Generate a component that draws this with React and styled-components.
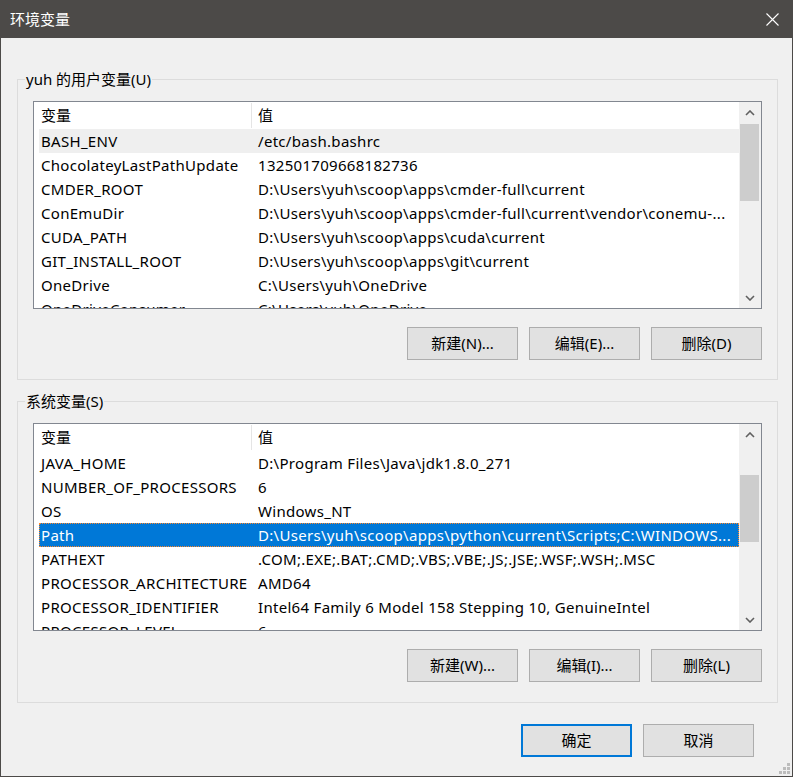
import React from 'react'
import styled, { createGlobalStyle } from 'styled-components'

const GlobalStyle = createGlobalStyle`
  html, body {
    margin: 0;
    padding: 0;
    background: #f0f0f0;
  }
  body {
    font-family: "Noto Sans", "Noto Sans CJK SC", sans-serif;
    font-size: 15px;
    color: #000;
  }
`

const Window = styled.div`
  position: relative;
  width: 793px;
  height: 777px;
  box-sizing: border-box;
  border: 1px solid #4c4a48;
  border-top: 0;
  background: #f0f0f0;
  display: flex;
  flex-direction: column;
  overflow: hidden;
`

const TitleBar = styled.div`
  height: 38px;
  flex-shrink: 0;
  background: #4c4a48;
  color: #fff;
  display: flex;
  align-items: center;
  justify-content: space-between;
  padding: 0 13px 0 9px;
  line-height: 20px;
`

const Body = styled.div`
  flex: 1;
  display: flex;
  flex-direction: column;
  padding: 31px 14px 0 16px;
`

const Group = styled.fieldset`
  margin: 0 0 ${p => p.$gap || 0}px;
  min-width: 0;
  border: 1px solid #dcdcdc;
  padding: 12px 15px ${p => p.$bottom}px 15px;

  legend {
    margin-left: -8px;
    padding: 0 1px;
    line-height: 20px;
  }
`

const ListBox = styled.div`
  height: 208px;
  box-sizing: border-box;
  border: 1px solid #828790;
  background: #fff;
  display: flex;
`

const ListContent = styled.div`
  flex: 1;
  min-width: 0;
  overflow: hidden;
  letter-spacing: 0.3px;
`

const HeaderRow = styled.div`
  display: grid;
  grid-template-columns: 213px 1fr;
  margin-left: 5px;
  height: 27px;
  line-height: 27px;
  letter-spacing: 0;
`

const HeaderCell = styled.div`
  box-sizing: border-box;
  padding-left: ${p => (p.$first ? 2 : 6)}px;
  border-right: ${p => (p.$first ? '1px solid #e5e5e5' : '0')};
  height: 25px;
  margin-top: 1px;
  line-height: 25px;
`

const Row = styled.div`
  display: grid;
  grid-template-columns: 213px 1fr;
  margin-left: 5px;
  height: 24px;
  line-height: 24px;
  background: ${p => (p.$selected ? '#0078d7' : p.$soft ? '#efefef' : 'transparent')};
  color: ${p => (p.$selected ? '#fff' : '#000')};
  outline: ${p => (p.$selected ? '1px dotted #ff8728' : 'none')};
  outline-offset: -1px;
`

const Cell = styled.div`
  white-space: nowrap;
  overflow: hidden;
  padding-left: ${p => (p.$first ? 2 : 6)}px;
`

const ScrollBar = styled.div`
  width: 22px;
  flex-shrink: 0;
  background: #f0f0f0;
  display: flex;
  flex-direction: column;
`

const ScrollButton = styled.div`
  height: 21px;
  display: flex;
  align-items: center;
  justify-content: center;
`

const ScrollTrack = styled.div`
  flex: 1;
`

const Thumb = styled.div`
  margin: ${p => p.$offset}px 2px 0 1px;
  height: ${p => p.$size}px;
  background: #cdcdcd;
`

const ButtonRow = styled.div`
  display: flex;
  justify-content: flex-end;
  gap: 11px;
  margin-top: ${p => p.$top}px;
  margin-right: ${p => p.$right || 0}px;
`

const Button = styled.button`
  width: 111px;
  height: 33px;
  box-sizing: border-box;
  padding: 0 0 1px;
  background: #e1e1e1;
  border: ${p => (p.$default ? '2px solid #0078d7' : '1px solid #adadad')};
  font: inherit;
  color: #000;
  line-height: 20px;
`

const Grip = styled.svg`
  position: absolute;
  right: 2px;
  bottom: 2px;
`

const Chevron = ({ down }) => (
  <svg width="10" height="6" viewBox="0 0 10 6">
    <polyline
      points={down ? '1,1 5,5 9,1' : '1,5 5,1 9,5'}
      fill="none"
      stroke="#606060"
      strokeWidth="1.6"
    />
  </svg>
)

const userVars = [
  ['BASH_ENV', '/etc/bash.bashrc'],
  ['ChocolateyLastPathUpdate', '132501709668182736'],
  ['CMDER_ROOT', 'D:\\Users\\yuh\\scoop\\apps\\cmder-full\\current'],
  ['ConEmuDir', 'D:\\Users\\yuh\\scoop\\apps\\cmder-full\\current\\vendor\\conemu-...'],
  ['CUDA_PATH', 'D:\\Users\\yuh\\scoop\\apps\\cuda\\current'],
  ['GIT_INSTALL_ROOT', 'D:\\Users\\yuh\\scoop\\apps\\git\\current'],
  ['OneDrive', 'C:\\Users\\yuh\\OneDrive'],
  ['OneDriveConsumer', 'C:\\Users\\yuh\\OneDrive'],
]

const systemVars = [
  ['JAVA_HOME', 'D:\\Program Files\\Java\\jdk1.8.0_271'],
  ['NUMBER_OF_PROCESSORS', '6'],
  ['OS', 'Windows_NT'],
  ['Path', 'D:\\Users\\yuh\\scoop\\apps\\python\\current\\Scripts;C:\\WINDOWS...'],
  ['PATHEXT', '.COM;.EXE;.BAT;.CMD;.VBS;.VBE;.JS;.JSE;.WSF;.WSH;.MSC'],
  ['PROCESSOR_ARCHITECTURE', 'AMD64'],
  ['PROCESSOR_IDENTIFIER', 'Intel64 Family 6 Model 158 Stepping 10, GenuineIntel'],
  ['PROCESSOR_LEVEL', '6'],
]

const VarList = ({ rows, selected, soft, thumbOffset, thumbSize }) => (
  <ListBox>
    <ListContent>
      <HeaderRow>
        <HeaderCell $first>变量</HeaderCell>
        <HeaderCell>值</HeaderCell>
      </HeaderRow>
      {rows.map(([name, value]) => (
        <Row key={name} $selected={name === selected} $soft={name === soft}>
          <Cell $first>{name}</Cell>
          <Cell>{value}</Cell>
        </Row>
      ))}
    </ListContent>
    <ScrollBar>
      <ScrollButton><Chevron /></ScrollButton>
      <ScrollTrack>
        <Thumb $offset={thumbOffset} $size={thumbSize} />
      </ScrollTrack>
      <ScrollButton><Chevron down /></ScrollButton>
    </ScrollBar>
  </ListBox>
)

export default function App() {
  return (
    <>
      <GlobalStyle />
      <Window>
        <TitleBar>
          <span>环境变量</span>
          <svg width="13" height="13" viewBox="0 0 13 13">
            <path d="M0.5 0.5 L12.5 12.5 M12.5 0.5 L0.5 12.5" stroke="#fff" strokeWidth="1.1" />
          </svg>
        </TitleBar>
        <Body>
          <Group $bottom={19} $gap={11}>
            <legend>yuh 的用户变量(U)</legend>
            <VarList rows={userVars} soft="BASH_ENV" thumbOffset={1} thumbSize={77} />
            <ButtonRow $top={18}>
              <Button>新建(N)...</Button>
              <Button>编辑(E)...</Button>
              <Button>删除(D)</Button>
            </ButtonRow>
          </Group>
          <Group $bottom={20}>
            <legend>系统变量(S)</legend>
            <VarList rows={systemVars} selected="Path" thumbOffset={30} thumbSize={67} />
            <ButtonRow $top={18}>
              <Button>新建(W)...</Button>
              <Button>编辑(I)...</Button>
              <Button>删除(L)</Button>
            </ButtonRow>
          </Group>
          <ButtonRow $top={21} $right={24}>
            <Button $default>确定</Button>
            <Button>取消</Button>
          </ButtonRow>
        </Body>
        <Grip width="11" height="11" viewBox="0 0 11 11">
          <g fill="#bcbcbc">
            <rect x="8" y="0" width="3" height="3" />
            <rect x="4" y="4" width="3" height="3" />
            <rect x="8" y="4" width="3" height="3" />
            <rect x="0" y="8" width="3" height="3" />
            <rect x="4" y="8" width="3" height="3" />
            <rect x="8" y="8" width="3" height="3" />
          </g>
        </Grip>
      </Window>
    </>
  )
}
